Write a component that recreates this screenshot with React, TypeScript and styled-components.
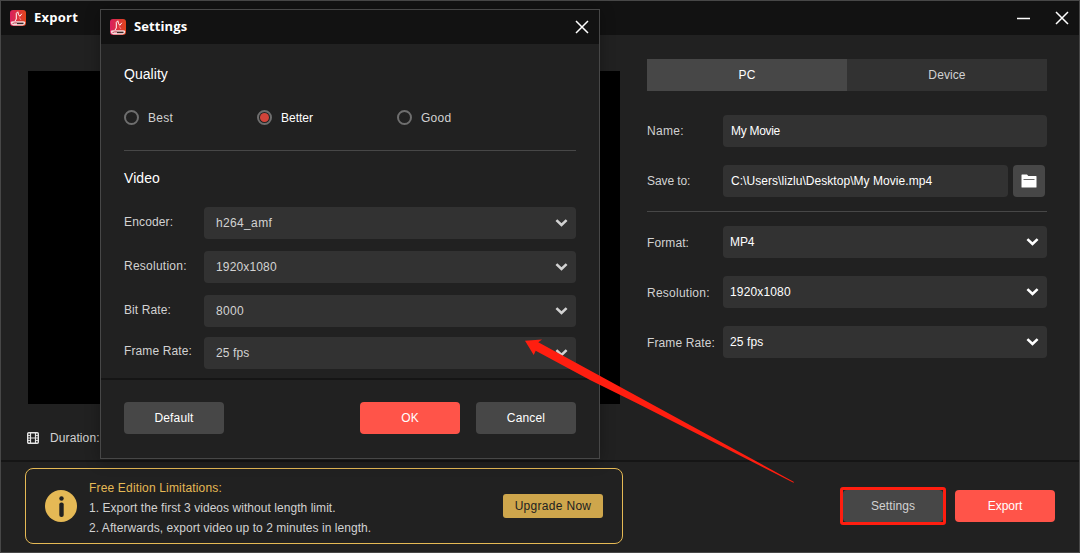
import React from 'react';
import styled, { createGlobalStyle } from 'styled-components';

const GlobalStyle = createGlobalStyle`
  * { box-sizing: border-box; }
  body {
    margin: 0;
    background: #212121;
    font-family: "Liberation Sans", Arial, sans-serif;
    font-size: 12px;
    line-height: 16px;
    color: #d2d2d2;
    overflow: hidden;
  }
  button { font: inherit; border: 0; padding: 0; margin: 0; }
`;

const Window = styled.div`
  position: relative;
  display: flex;
  flex-direction: column;
  width: 1080px;
  height: 553px;
  border: 1px solid #474747;
  background: #212121;
`;

const TitleBar = styled.header`
  display: flex;
  align-items: center;
  height: 34px;
  flex: none;
  padding: 0 10px 0 9px;
  background: #121212;
`;

const Title = styled.h1<{ $track?: number }>`
  flex: 1;
  margin: 0 0 2px 8px;
  font: 700 13px/18px "Open Sans", sans-serif;
  letter-spacing: ${(p) => p.$track ?? 0}px;
  color: #fff;
`;

const IconButton = styled.button<{ $gap?: number }>`
  display: flex;
  margin-left: ${(p) => p.$gap ?? 0}px;
  margin-bottom: 1px;
  background: none;
  color: #fff;
`;

const Main = styled.main`
  display: flex;
  height: 425px;
  flex: none;
`;

const PreviewPane = styled.section`
  display: flex;
  flex-direction: column;
  width: 646px;
  padding: 36px 27px 0;
`;

const Preview = styled.div`
  width: 592px;
  height: 333px;
  background: #000;
`;

const Duration = styled.div`
  display: flex;
  align-items: center;
  gap: 11px;
  margin-top: 26px;
  margin-left: -1px;
`;

const OptionsPane = styled.section`
  width: 400px;
  padding-top: 24px;
`;

const Tabs = styled.div`
  display: flex;
  height: 32px;
  margin-bottom: 24px;
`;

const Tab = styled.button<{ $active?: boolean }>`
  flex: 1;
  background: ${(p) => (p.$active ? '#474747' : '#323232')};
  color: ${(p) => (p.$active ? '#fff' : '#d2d2d2')};
  letter-spacing: 0.1px;
`;

const Row = styled.div<{ $gap: number }>`
  display: flex;
  align-items: center;
  height: 32px;
  margin-bottom: ${(p) => p.$gap}px;
`;

const Label = styled.label<{ $width: number; $track?: number; $rise?: number; $drop?: number }>`
  width: ${(p) => p.$width}px;
  flex: none;
  padding-top: ${(p) => p.$drop ?? 0}px;
  padding-bottom: ${(p) => p.$rise ?? 0}px;
  letter-spacing: ${(p) => p.$track ?? 0}px;
  white-space: nowrap;
`;

const Field = styled.div<{ $pad?: number; $track?: number; $color?: string }>`
  display: flex;
  flex: 1;
  align-items: center;
  justify-content: space-between;
  height: 32px;
  padding: 0 8px 0 ${(p) => p.$pad ?? 8}px;
  border-radius: 4px;
  background: #323232;
  color: ${(p) => p.$color ?? '#fff'};
  letter-spacing: ${(p) => p.$track ?? 0}px;
  white-space: nowrap;
`;

const FolderButton = styled.button`
  display: flex;
  align-items: center;
  justify-content: center;
  width: 32px;
  height: 32px;
  margin: 0 2px 0 5px;
  border-radius: 4px;
  background: #474747;
`;

const Divider = styled.hr<{ $bottom: number }>`
  height: 1px;
  margin: 0 0 ${(p) => p.$bottom}px;
  border: 0;
  background: #474747;
`;

const Footer = styled.footer`
  display: flex;
  align-items: flex-start;
  justify-content: space-between;
  flex: 1;
  padding: 6px 24px 0;
  border-top: 2px solid #151515;
`;

const Notice = styled.div`
  display: flex;
  align-items: center;
  width: 598px;
  height: 76px;
  padding: 0 19px;
  border: 1px solid #e5b955;
  border-radius: 8px;
`;

const NoticeText = styled.div`
  flex: 1;
  margin-left: 12px;
  padding-top: 3px;
  line-height: 20px;
`;

const NoticeLine = styled.p<{ $track?: number; $accent?: boolean }>`
  margin: 0;
  color: ${(p) => (p.$accent ? '#e5b955' : '#d2d2d2')};
  letter-spacing: ${(p) => p.$track ?? 0}px;
`;

const UpgradeButton = styled.button`
  width: 100px;
  height: 24px;
  border-radius: 3px;
  background: #cea64c;
  color: #212121;
  letter-spacing: 0.3px;
`;

const Button = styled.button<{ $primary?: boolean; $muted?: boolean; $track?: number }>`
  width: 100px;
  height: 32px;
  border-radius: 4px;
  background: ${(p) => (p.$primary ? '#ff5449' : '#474747')};
  color: ${(p) => (p.$muted ? '#d2d2d2' : '#fff')};
  letter-spacing: ${(p) => p.$track ?? 0}px;
`;

const FooterActions = styled.div`
  display: flex;
  align-items: center;
  gap: 9px;
  margin-top: 19px;
`;

const Highlight = styled.div`
  display: flex;
  border: 3px solid #ff1e10;
  border-radius: 3px;
`;

const Dialog = styled.div`
  position: absolute;
  left: 99px;
  top: 8px;
  display: flex;
  flex-direction: column;
  width: 500px;
  height: 450px;
  border: 1px solid #474747;
  background: #212121;
  box-shadow: 0 2px 14px rgba(0, 0, 0, 0.3);
`;

const DialogBody = styled.div`
  height: 334px;
  padding: 21px 23px 0;
`;

const SectionTitle = styled.h2<{ $bottom: number }>`
  margin: 0 0 ${(p) => p.$bottom}px;
  font-size: 14px;
  font-weight: 400;
  line-height: 18px;
  color: #fff;
  letter-spacing: 0.05px;
`;

const Radios = styled.div`
  display: flex;
  height: 15px;
  margin-bottom: 25px;
`;

const RadioOption = styled.label<{ $width: number; $checked?: boolean; $track?: number }>`
  display: flex;
  align-items: center;
  gap: 9px;
  width: ${(p) => p.$width}px;
  color: ${(p) => (p.$checked ? '#fff' : '#d2d2d2')};
  letter-spacing: ${(p) => p.$track ?? 0}px;
`;

const RadioMark = styled.span<{ $checked?: boolean }>`
  display: flex;
  align-items: center;
  justify-content: center;
  width: 15px;
  height: 15px;
  border: 2px solid #6e6e6e;
  border-radius: 50%;
  &::after {
    content: "";
    width: 9px;
    height: 9px;
    border-radius: 50%;
    background: ${(p) => (p.$checked ? '#d3443a' : 'transparent')};
  }
`;

const DialogFooter = styled.div`
  display: flex;
  gap: 16px;
  padding: 22px 23px 0;
  border-top: 2px solid #151515;
`;

const DefaultSlot = styled.div`
  display: flex;
  flex: 1;
`;

const Pointer = styled.svg`
  position: absolute;
  left: -1px;
  top: -1px;
  pointer-events: none;
`;

const Logo = ({ id }: { id: string }) => (
  <svg width="16" height="16" viewBox="0 0 16 16">
    <defs>
      <linearGradient id={id} x1="0" y1="0" x2="1" y2="0">
        <stop offset="0" stopColor="#d9205f" />
        <stop offset="1" stopColor="#e0451c" />
      </linearGradient>
    </defs>
    <rect width="16" height="16" rx="3" fill={`url(#${id})`} />
    <path d="M.8 12.300Q1 11.300 3 11.200H13Q15 11.300 15.200 12.300V13Q15 15.400 12.500 15.400H3.500Q1 15.400 .8 13Z" fill="#f7dcdc" />
    <path d="M2.500 13.600Q4 12.600 7 12.900" fill="none" stroke="#c23a50" strokeWidth="1" />
    <path d="M7 13.400H13.500" stroke="#3a2424" strokeWidth="1.500" />
    <path d="M5 11L6.300 9V3.300L7.800 1.800L8.500 4.500L9.800 6.300L11.800 3.800" fill="none" stroke="#fff" strokeWidth="1" />
    <path d="M9.300 7.500L11 10" stroke="#ffb0a4" strokeWidth=".7" />
  </svg>
);

const CloseIcon = () => (
  <svg width="14" height="14" viewBox="0 0 14 14">
    <path d="M1 1L13 13M13 1L1 13" stroke="currentColor" strokeWidth="1.5" />
  </svg>
);

const MinimizeIcon = () => (
  <svg width="13" height="14" viewBox="0 0 13 14">
    <path d="M0 7.500H13" stroke="currentColor" strokeWidth="1.500" />
  </svg>
);

const Chevron = () => (
  <svg width="13" height="10" viewBox="0 0 13 10">
    <path d="M1.400 2.100L6.500 6.900L11.600 2.100" fill="none" stroke="currentColor" strokeWidth="2.600" />
  </svg>
);

const FolderIcon = () => (
  <svg width="16" height="14" viewBox="0 0 16 14">
    <path d="M1 .6H6L7.300 2H15Q15.500 2 15.500 2.500V13Q15.500 13.500 15 13.500H1Q.5 13.500 .5 13V1.100Q.5.6 1 .6Z" fill="#fff" />
    <path d="M2.500 5.500H13.500" stroke="#6a6a6a" strokeWidth="1" />
  </svg>
);

const FilmIcon = () => (
  <svg width="12" height="12" viewBox="0 0 12 12" fill="none" stroke="#e4e4e4">
    <rect x=".7" y=".7" width="10.600" height="10.600" rx="1" strokeWidth="1.400" />
    <path d="M3.500 0V12M8.500 0V12M3.500 6H8.500" strokeWidth="1.200" />
    <path d="M0 3.500H3.500M0 6H3.500M0 8.500H3.500M8.500 3.500H12M8.500 6H12M8.500 8.500H12" strokeWidth=".9" />
  </svg>
);

const InfoIcon = () => (
  <svg width="32" height="32" viewBox="0 0 32 32">
    <circle cx="16" cy="16" r="16" fill="#e5b955" />
    <circle cx="16.500" cy="8.500" r="2.200" fill="#212121" />
    <rect x="14.300" y="12.500" width="4.400" height="14.500" rx="2" fill="#212121" />
  </svg>
);

const videoRows = [
  { label: 'Encoder:', value: 'h264_amf', gap: 12, lt: 0.15, vt: 0.35 },
  { label: 'Resolution:', value: '1920x1080', gap: 12, lt: 0.25, vt: 0.15 },
  { label: 'Bit Rate:', value: '8000', gap: 10, lt: 0.1, vt: 0.3 },
  { label: 'Frame Rate:', value: '25 fps', gap: 0, lt: 0.12, vt: 0.1, rise: 4 },
];

const exportRows = [
  { label: 'Format:', value: 'MP4', lt: 0.1, vt: -0.1 },
  { label: 'Resolution:', value: '1920x1080', lt: 0.25, vt: 0.15 },
  { label: 'Frame Rate:', value: '25 fps', lt: 0.12, vt: 0.1 },
];

export default function App() {
  return (
    <>
      <GlobalStyle />
      <Window>
        <TitleBar>
          <Logo id="logoMain" />
          <Title $track={0.25}>Export</Title>
          <IconButton><MinimizeIcon /></IconButton>
          <IconButton $gap={25}><CloseIcon /></IconButton>
        </TitleBar>
        <Main>
          <PreviewPane>
            <Preview />
            <Duration>
              <FilmIcon />
              <Label $width={60} $track={0.1}>Duration:</Label>
            </Duration>
          </PreviewPane>
          <OptionsPane>
            <Tabs>
              <Tab $active>PC</Tab>
              <Tab>Device</Tab>
            </Tabs>
            <Row $gap={18}>
              <Label $width={76} $track={0.3}>Name:</Label>
              <Field $track={-0.3}>My Movie</Field>
            </Row>
            <Row $gap={14}>
              <Label $width={76} $track={-0.1}>Save to:</Label>
              <Field $track={0.05}>C:\Users\lizlu\Desktop\My Movie.mp4</Field>
              <FolderButton><FolderIcon /></FolderButton>
            </Row>
            <Divider $bottom={14} />
            {exportRows.map((r) => (
              <Row key={r.label} $gap={18}>
                <Label $width={76} $track={r.lt} $drop={2}>{r.label}</Label>
                <Field $pad={7} $track={r.vt}>{r.value}<Chevron /></Field>
              </Row>
            ))}
          </OptionsPane>
        </Main>
        <Footer>
          <Notice>
            <InfoIcon />
            <NoticeText>
              <NoticeLine $accent $track={0.17}>Free Edition Limitations:</NoticeLine>
              <NoticeLine $track={0.05}>1. Export the first 3 videos without length limit.</NoticeLine>
              <NoticeLine $track={0.05}>2. Afterwards, export video up to 2 minutes in length.</NoticeLine>
            </NoticeText>
            <UpgradeButton>Upgrade Now</UpgradeButton>
          </Notice>
          <FooterActions>
            <Highlight><Button $muted $track={0.1}>Settings</Button></Highlight>
            <Button $primary>Export</Button>
          </FooterActions>
        </Footer>

        <Dialog>
          <TitleBar>
            <Logo id="logoDialog" />
            <Title $track={0.1}>Settings</Title>
            <IconButton><CloseIcon /></IconButton>
          </TitleBar>
          <DialogBody>
            <SectionTitle $bottom={27}>Quality</SectionTitle>
            <Radios>
              <RadioOption $width={133} $track={0.25}><RadioMark />Best</RadioOption>
              <RadioOption $width={140} $checked><RadioMark $checked />Better</RadioOption>
              <RadioOption $width={100} $track={0.25}><RadioMark />Good</RadioOption>
            </Radios>
            <Divider $bottom={18} />
            <SectionTitle $bottom={20}>Video</SectionTitle>
            {videoRows.map((r) => (
              <Row key={r.label} $gap={r.gap}>
                <Label $width={80} $track={r.lt} $rise={r.rise ?? 2}>{r.label}</Label>
                <Field $pad={12} $track={r.vt} $color="#d2d2d2">{r.value}<Chevron /></Field>
              </Row>
            ))}
          </DialogBody>
          <DialogFooter>
            <DefaultSlot><Button $track={0.15}>Default</Button></DefaultSlot>
            <Button $primary>OK</Button>
            <Button $track={0.15}>Cancel</Button>
          </DialogFooter>
        </Dialog>

        <Pointer width="1080" height="553" viewBox="0 0 1080 553">
          <path d="M525 340.700L542 339.400L538.300 342.300L640 397.700L794 482L793.500 482.800L640 404.700L590 380L535.700 350.700L533.700 355Z" fill="#ff1e10" />
        </Pointer>
      </Window>
    </>
  );
}
